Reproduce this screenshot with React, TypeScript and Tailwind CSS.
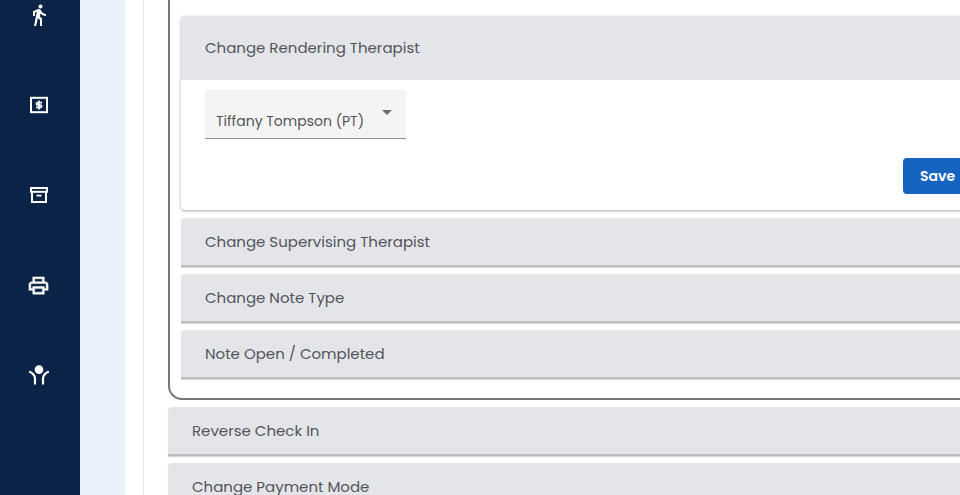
import { MdDirectionsWalk } from "react-icons/md";

const font = "font-['Poppins','Open_Sans','Noto_Sans',sans-serif]";

function DollarBox() {
  return (
    <svg viewBox="0 0 20 20" className="w-5 h-5" fill="none">
      <rect x="2" y="2.8" width="16" height="14.4" stroke="white" strokeWidth="2" />
      <path
        d="M13 7.7H8.4a.9.9 0 0 0-.9.9v.5a.9.9 0 0 0 .9.9h3.2a.9.9 0 0 1 .9.9v.5a.9.9 0 0 1-.9.9H7M10 5.6v8.8"
        stroke="white"
        strokeWidth="1.7"
      />
    </svg>
  );
}

function ArchiveBox() {
  return (
    <svg viewBox="0 0 20 20" className="w-5 h-5" fill="none" stroke="white">
      <rect x="2" y="3" width="16" height="3.8" strokeWidth="2" />
      <path d="M3 6.8V17h14V6.8" strokeWidth="2" />
      <path d="M7.5 10.6h5" strokeWidth="1.8" />
    </svg>
  );
}

function Printer() {
  return (
    <svg viewBox="0 0 24 24" className="w-[23px] h-[23px]" fill="white" stroke="white" strokeWidth="0.5">
      <path d="M19 8h-1V3H6v5H5c-1.66 0-3 1.34-3 3v6h4v4h12v-4h4v-6c0-1.66-1.34-3-3-3zM8 5h8v3H8V5zm8 12v2H8v-4h8v2zm2-2v-2H6v2H4v-4c0-.55.45-1 1-1h14c.55 0 1 .45 1 1v4h-2z" />
    </svg>
  );
}

function ArmsUp() {
  return (
    <svg viewBox="0 0 22 20" className="w-[22px] h-5" fill="none">
      <circle cx="11" cy="4.6" r="4.3" fill="white" />
      <path
        d="M1.2 6.5C3.5 7.5 6.5 9.5 7 13V19.5M20.8 6.5C18.5 7.5 15.5 9.5 15 13V19.5"
        stroke="white"
        strokeWidth="2.2"
      />
    </svg>
  );
}

function Row({ label }: { label: string }) {
  return (
    <div className="h-[49px] flex items-center pt-px pl-6 bg-[#e4e5e9] rounded-t-[4px] border-b-2 border-[#bdbdbf] shadow-[0_1px_1px_rgba(0,0,0,0.18)]">
      <span className="text-[15px] whitespace-nowrap text-[#53545b]">{label}</span>
    </div>
  );
}

export default function App() {
  return (
    <div className={`flex h-[495px] w-[960px] overflow-hidden bg-white ${font}`}>
      {/* Sidebar */}
      <div className="w-[80px] shrink-0 bg-[#0b2347] text-white flex flex-col items-center -mt-[30px] pr-[3px]">
        <div className="h-[90px] shrink-0 flex items-center justify-center">
          <MdDirectionsWalk className="w-6 h-6" />
        </div>
        <div className="h-[90px] shrink-0 flex items-center justify-center">
          <DollarBox />
        </div>
        <div className="h-[90px] shrink-0 flex items-center justify-center">
          <ArchiveBox />
        </div>
        <div className="h-[90px] shrink-0 flex items-center justify-center">
          <Printer />
        </div>
        <div className="h-[90px] shrink-0 flex items-center justify-center">
          <ArmsUp />
        </div>
        <div className="flex-1 min-h-[60px]" />
      </div>

      {/* Blue gutter */}
      <div className="w-[45px] shrink-0 bg-[#e8f0fa]" />
      <div className="w-[18px] shrink-0 bg-white" />

      {/* Page card */}
      <div className="w-[1000px] shrink-0 border-l border-[#e6e6e6] pl-[24px]">
        <div className="-mt-[20px] border-2 border-[#77787a] border-r-0 rounded-l-[14px] pl-[11px] pt-[34px] h-[420px]">
          <div className="rounded-[4px] bg-white shadow-[0_1px_3px_rgba(0,0,0,0.35)]">
            <div className="h-[64px] flex items-center pt-px pl-6 bg-[#e4e5e9] rounded-t-[4px]">
              <span className="text-[15px] whitespace-nowrap text-[#53545b]">Change Rendering Therapist</span>
            </div>
            <div className="h-[130px] pt-[9px] pl-6">
              <div className="w-[201px] h-[50px] bg-[#f4f4f5] border-b border-[#8f8f92] rounded-t-[4px] flex justify-between pl-[11px] pr-[14px]">
                <span className="pt-[22px] text-[14px] leading-[20px] whitespace-nowrap text-[#53545b]">Tiffany Tompson (PT)</span>
                <span className="mt-[21px] w-0 h-0 border-x-[5px] border-x-transparent border-t-[5px] border-t-[#6b6b6e]" />
              </div>
              <div className="ml-[698px] mt-[19px] w-[70px] h-9 pt-px rounded-[4px] bg-[#1565c0] flex items-center pl-[17px]">
                <span className="text-[14px] font-semibold text-white">Save</span>
              </div>
            </div>
          </div>
          <div className="mt-2 flex flex-col gap-[7px]">
            <Row label="Change Supervising Therapist" />
            <Row label="Change Note Type" />
            <Row label="Note Open / Completed" />
          </div>
        </div>
        <div className="mt-[7px] flex flex-col gap-[7px]">
          <Row label="Reverse Check In" />
          <Row label="Change Payment Mode" />
        </div>
      </div>
    </div>
  );
}
